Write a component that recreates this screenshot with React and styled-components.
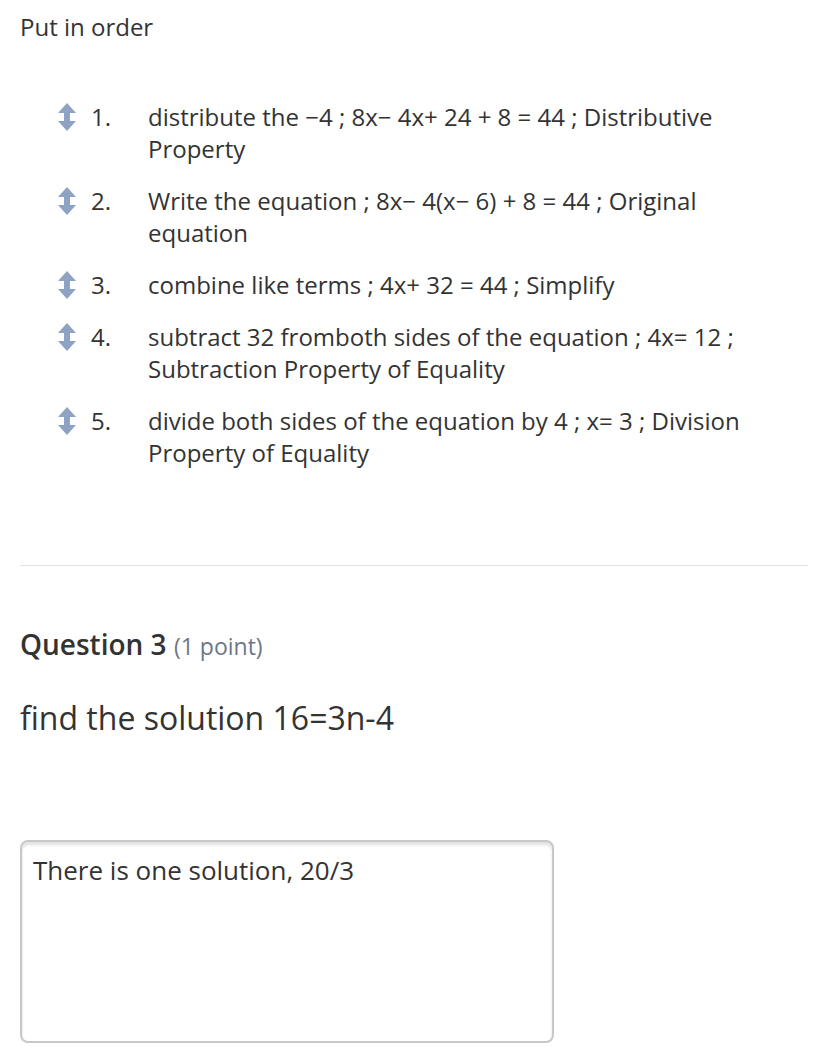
import styled, { createGlobalStyle } from 'styled-components'

const GlobalStyle = createGlobalStyle`
  body {
    margin: 0;
    background: #fff;
    font-family: 'Open Sans', 'Noto Sans', sans-serif;
    color: #333;
  }
`

const items = [
  'distribute the \u22124 ; 8x\u2212 4x+ 24 + 8 = 44 ; Distributive Property',
  'Write the equation ; 8x\u2212 4(x\u2212 6) + 8 = 44 ; Original equation',
  'combine like terms ; 4x+ 32 = 44 ; Simplify',
  'subtract 32 fromboth sides of the equation ; 4x= 12 ; Subtraction Property of Equality',
  'divide both sides of the equation by 4 ; x= 3 ; Division Property of Equality',
]

function SortIcon() {
  return (
    <svg width="20" height="28" viewBox="0 0 20 28">
      <path
        d="M10 0 L19 10 L13 10 L13 18 L19 18 L10 28 L1 18 L7 18 L7 10 L1 10 Z"
        fill="#8ea3c4"
      />
    </svg>
  )
}

export default function App() {
  return (
    <Page>
      <GlobalStyle />
      <Prompt>Put in order</Prompt>
      <OrderList>
        {items.map((text, i) => (
          <OrderRow key={i}>
            <Handle>
              <SortIcon />
            </Handle>
            <Num>{i + 1}.</Num>
            <ItemText>{text}</ItemText>
          </OrderRow>
        ))}
      </OrderList>
      <Divider />
      <QuestionHead>
        Question 3 <Points>(1 point)</Points>
      </QuestionHead>
      <QuestionText>find the solution 16=3n-4</QuestionText>
      <Answer defaultValue="There is one solution, 20/3" />
    </Page>
  )
}

const Page = styled.div`
  padding: 0 20px;
`

const Prompt = styled.div`
  font-size: 24px;
  line-height: 32px;
  padding-top: 11px;
  color: #333;
`

const OrderList = styled.div`
  display: flex;
  flex-direction: column;
  gap: 20px;
  margin-top: 58px;
  padding-left: 37px;
`

const OrderRow = styled.div`
  display: flex;
  align-items: flex-start;
  font-size: 24px;
  line-height: 32px;
`

const Handle = styled.div`
  width: 34px;
  flex-shrink: 0;
  padding-top: 2px;
  display: flex;
  svg {
    display: block;
  }
`

const Num = styled.span`
  width: 57px;
  flex-shrink: 0;
`

const ItemText = styled.span`
  max-width: 600px;
`

const Divider = styled.hr`
  border: none;
  border-top: 1px solid #e3e3e3;
  margin: 96px 0 0;
`

const QuestionHead = styled.div`
  margin-top: 60px;
  font-size: 28px;
  font-weight: 600;
  line-height: 36px;
  color: #333;
`

const Points = styled.span`
  font-size: 23px;
  font-weight: 400;
  color: #6d7785;
`

const QuestionText = styled.div`
  margin-top: 34px;
  font-size: 32px;
  line-height: 40px;
  color: #333;
`

const Answer = styled.textarea`
  display: block;
  box-sizing: border-box;
  margin-top: 102px;
  width: 534px;
  height: 203px;
  padding: 11px 11px;
  font-family: 'Open Sans', 'Noto Sans', sans-serif;
  font-size: 26px;
  line-height: 34px;
  color: #333;
  border: 2px solid #c8c8c8;
  border-radius: 8px;
  box-shadow: inset 0 3px 3px rgba(0, 0, 0, 0.12);
  resize: none;
  outline: none;
`
